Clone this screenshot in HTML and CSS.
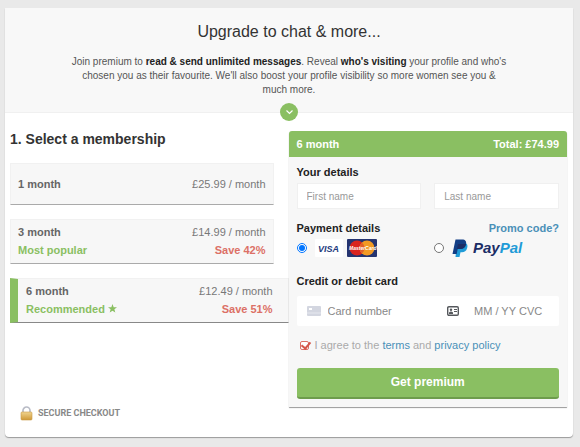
FILE: index.html
```html
<!DOCTYPE html>
<html lang="en">
<head>
    <meta charset="UTF-8">
    <meta name="viewport" content="width=device-width, initial-scale=1.0">
    <title>Upgrade to premium</title>
    <link rel="stylesheet" href="styles.css">
</head>
<body>
    <main class="card">
        <header class="intro">
            <h1>Upgrade to chat &amp; more...</h1>
            <p>Join premium to <strong>read &amp; send unlimited messages</strong>. Reveal <strong>who's visiting</strong> your profile and who's chosen you as their favourite. We'll also boost your profile visibility so more women see you &amp; much more.</p>
            <span class="arrow">
                <svg width="9" height="6" viewBox="0 0 9 6"><path d="M1.500 1.500l3 3 3-3" fill="none" stroke="#fff" stroke-width="1.200"/></svg>
            </span>
        </header>
        <form class="columns">
            <section class="plans">
                <h2>1. Select a membership</h2>
                <button type="button" class="plan">
                    <span class="row"><b>1 month</b><span>£25.99 / month</span></span>
                </button>
                <button type="button" class="plan">
                    <span class="row"><b>3 month</b><span>£14.99 / month</span></span>
                    <span class="row"><b class="tag">Most popular</b><b class="save">Save 42%</b></span>
                </button>
                <button type="button" class="plan selected">
                    <span class="row"><b>6 month</b><span>£12.49 / month</span></span>
                    <span class="row">
                        <b class="tag">Recommended
                            <svg width="9" height="9" viewBox="0 0 10 10"><path d="M5 0l1.3 3.5 3.7.1-2.9 2.3 1 3.6L5 7.4 1.9 9.5l1-3.6L0 3.6l3.7-.1z" fill="#8abf62"/></svg>
                        </b>
                        <b class="save">Save 51%</b>
                    </span>
                </button>
                <div class="secure">
                    <svg width="13" height="15" viewBox="0 0 13 15">
                        <defs>
                            <linearGradient id="gold" x1="0" y1="0" x2="0" y2="1">
                                <stop offset="0" stop-color="#f0d490"/>
                                <stop offset="1" stop-color="#cf9836"/>
                            </linearGradient>
                        </defs>
                        <path d="M3 8V4.500a3.500 3.500 0 0 1 7 0V8" fill="none" stroke="#b9bcc6" stroke-width="1.700"/>
                        <rect x="1" y="6" width="11" height="8" rx="1" fill="url(#gold)" stroke="#c99a48" stroke-width=".6"/>
                    </svg>
                    SECURE CHECKOUT
                </div>
            </section>
            <section class="checkout">
                <div class="total"><span>6 month</span><span>Total: £74.99</span></div>
                <div class="details">
                    <h3>Your details</h3>
                    <div class="names">
                        <input type="text" placeholder="First name" aria-label="First name">
                        <input type="text" placeholder="Last name" aria-label="Last name">
                    </div>
                    <div class="payment-title">
                        <h3>Payment details</h3>
                        <a href="#">Promo code?</a>
                    </div>
                    <div class="methods">
                        <label>
                            <input type="radio" name="method" aria-label="Card" checked>
                            <svg class="cards" width="62" height="20" viewBox="0 0 62 20">
                                <rect x="0" y="1" width="28" height="18" rx="1" fill="#fff"/>
                                <text x="3" y="14" class="visa">VISA</text>
                                <rect x="32" y="1" width="30" height="18" rx="1" fill="#253470"/>
                                <circle cx="42" cy="10" r="7.500" fill="#d9241f"/>
                                <circle cx="52" cy="10" r="7.500" fill="#f29a24"/>
                                <path d="M47 4.400a7.500 7.500 0 0 1 0 11.200 7.500 7.500 0 0 1 0-11.200z" fill="#e2602a"/>
                                <text x="34" y="12" class="mastercard">MasterCard</text>
                            </svg>
                        </label>
                        <label>
                            <input type="radio" name="method" aria-label="PayPal">
                            <svg class="paypal" width="80" height="20" viewBox="0 0 80 20">
                                <path d="M5 5h7c3.500 0 4 2.500 3 5.500-.8 2.500-2.500 3.700-5 3.700H8.500L7.500 19H3.500z" fill="#1f9bd7"/>
                                <path d="M3.500 1.500h6.500c3.500 0 4.700 2 4 5-.7 3-2.800 4.500-6 4.500H5.700L4.700 16H.5z" fill="#123e85"/>
                                <path d="M6 6h8c-.7 3.300-2.500 5-6 5H5z" fill="#1b2d66"/>
                                <text x="21" y="15" class="pay">Pay<tspan class="pal">Pal</tspan></text>
                            </svg>
                        </label>
                    </div>
                    <h3>Credit or debit card</h3>
                    <div class="card-fields">
                        <svg width="14" height="10" viewBox="0 0 14 10"><rect width="14" height="10" rx="1" fill="#d3d6e0"/><rect x="2" y="2" width="3" height="2" fill="#fff"/><path d="M0 7h14" stroke="#e6e8ef"/></svg>
                        <input type="text" class="number" placeholder="Card number" aria-label="Card number">
                        <svg width="12" height="10" viewBox="0 0 12 10"><rect x=".7" y=".7" width="10.600" height="8.600" rx="1.200" fill="#fff" stroke="#55585c" stroke-width="1.400"/><circle cx="4" cy="3.700" r="1.200" fill="#55585c"/><path d="M2 8V6.500q2-2 4 0V8z" fill="#55585c"/><path d="M7 3.500h3M7 5.500h3" stroke="#55585c"/></svg>
                        <input type="text" class="expiry" placeholder="MM / YY" aria-label="Expiry date">
                        <input type="text" class="cvc" placeholder="CVC" aria-label="CVC">
                    </div>
                    <div class="agree">
                        <input type="checkbox" id="agree" checked>
                        <label for="agree">I agree to the <a href="#">terms</a> and <a href="#">privacy policy</a></label>
                    </div>
                    <button type="submit" class="submit">Get premium</button>
                </div>
            </section>
        </form>
    </main>
</body>
</html>
```
FILE: styles.css
```css
:root {
    --green: #8abf62;
    --panel: #f7f7f7;
    --blue: #4a90b8;
}
* {
    box-sizing: border-box;
}
body {
    margin: 0;
    padding: 8px 7px 8px 5px;
    background: #e9e9e9;
    color: #333;
    font-family: "Liberation Sans", Arial, sans-serif;
    font-size: 11px;
    line-height: 18px;
}
h1, h2, h3, p {
    margin: 0;
}
a {
    color: var(--blue);
    text-decoration: none;
}
input, button {
    font-family: inherit;
    font-size: inherit;
}
.card {
    background: #fff;
    border-radius: 0 0 4px 4px;
    box-shadow: 0 1px 1px #999;
}
.intro {
    position: relative;
    padding: 12px 66px 15px;
    background: #f8f8f8;
    border-bottom: 1px solid #f0f0f0;
    text-align: center;
}
.intro h1 {
    margin-bottom: 11px;
    font-size: 16px;
    font-weight: normal;
    line-height: 24px;
}
.intro p {
    color: #555;
    font-size: 10px;
    line-height: 14px;
}
.intro strong {
    color: #222;
}
.arrow {
    position: absolute;
    left: 50%;
    bottom: -9px;
    display: flex;
    align-items: center;
    justify-content: center;
    width: 18px;
    height: 18px;
    margin-left: -9px;
    border-radius: 50%;
    background: var(--green);
}
.columns {
    display: grid;
    grid-template-columns: minmax(0, 1fr) minmax(0, 1fr);
    padding: 18px 6px 30px 5px;
}
.plans {
    display: flex;
    flex-direction: column;
}
.plans h2 {
    margin-bottom: 15px;
    font-size: 14px;
    line-height: 17px;
}
.plan {
    display: block;
    margin: 0 15px 14px 0;
    padding: 3px 7px 4px;
    border: 1px solid #f1f1f1;
    border-bottom: 1px solid #aaa;
    background: var(--panel);
    color: #777;
    line-height: 18px;
    cursor: pointer;
}
.plan:first-of-type {
    padding: 11px 7px;
}
.row {
    display: flex;
    justify-content: space-between;
}
.row b {
    color: #666;
}
.row .tag {
    color: var(--green);
}
.row .save {
    color: #dc7066;
}
.plan.selected {
    margin-right: 0;
    padding-left: 8px;
    padding-right: 15px;
    border-left: 8px solid var(--green);
    border-bottom-color: #888;
}
.secure {
    display: flex;
    align-items: center;
    gap: 5px;
    margin-top: auto;
    padding-left: 10px;
    margin-bottom: -15px;
    color: #888;
    font-family: Roboto, sans-serif;
    font-size: 9px;
    font-weight: bold;
}
.checkout {
    border-radius: 3px 3px 0 0;
    background: var(--panel);
    box-shadow: 0 1px 1px #999;
}
.total {
    display: flex;
    justify-content: space-between;
    padding: 4px 8px;
    border-radius: 3px 3px 0 0;
    background: var(--green);
    color: #fff;
    font-weight: bold;
}
.details {
    padding: 6px 8px 8px;
}
.details h3 {
    color: #222;
    font-size: 11px;
}
.names, .methods {
    display: grid;
    grid-template-columns: 1fr 1fr;
    gap: 13px;
}
.names {
    margin: 2px 0 10px;
}
.names input {
    width: 100%;
    height: 26px;
    padding: 0 9px;
    border: 1px solid #f0f0f0;
    background: #fff;
    font-size: 10px;
}
input::placeholder {
    color: #999;
}
.payment-title {
    display: flex;
    justify-content: space-between;
    font-weight: bold;
}
.methods {
    margin-bottom: 13px;
}
.methods label {
    display: flex;
    align-items: center;
}
.methods input {
    width: 10px;
    height: 10px;
    margin: 0 8px 0 0;
}
.cards, .paypal {
    margin: 1px 0;
}
.visa {
    fill: #233a7c;
    font: italic bold 9px "Liberation Sans", sans-serif;
}
.mastercard {
    fill: #fff;
    font: italic bold 5px "Liberation Sans", sans-serif;
}
.pay {
    fill: #1b2d66;
    font: italic bold 15px "Liberation Sans", sans-serif;
}
.pal {
    fill: #1f9bd7;
}
.card-fields {
    display: flex;
    align-items: center;
    height: 30px;
    margin: 6px 0 10px;
    padding: 0 10px;
    border-radius: 2px;
    background: #fff;
}
.card-fields input {
    min-width: 0;
    padding: 0;
    border: 0;
    background: none;
}
.card-fields .number {
    flex: 1;
    margin-left: 7px;
}
.card-fields .expiry {
    width: 45px;
    margin-left: 15px;
}
.card-fields .cvc {
    width: 30px;
}
.card-fields input::placeholder {
    color: #888;
}
.agree {
    display: flex;
    align-items: center;
    gap: 6px;
    margin-bottom: 14px;
    padding-left: 3px;
    color: #aaa;
}
.agree input {
    appearance: none;
    position: relative;
    width: 9px;
    height: 9px;
    margin: 0;
    border: 1px solid #dc7066;
    border-radius: 2px;
    background: #fff;
}
.agree input:checked::after {
    content: "";
    position: absolute;
    left: 2px;
    top: -2px;
    width: 4px;
    height: 7px;
    border: solid #d4574b;
    border-width: 0 2px 2px 0;
    transform: rotate(40deg);
}
.submit {
    display: block;
    width: 100%;
    height: 31px;
    padding: 0 0 2px;
    border: 0;
    border-bottom: 2px solid #6d9c4c;
    border-radius: 3px;
    background: var(--green);
    color: #fff;
    font-size: 12px;
    font-weight: bold;
    cursor: pointer;
}
```
